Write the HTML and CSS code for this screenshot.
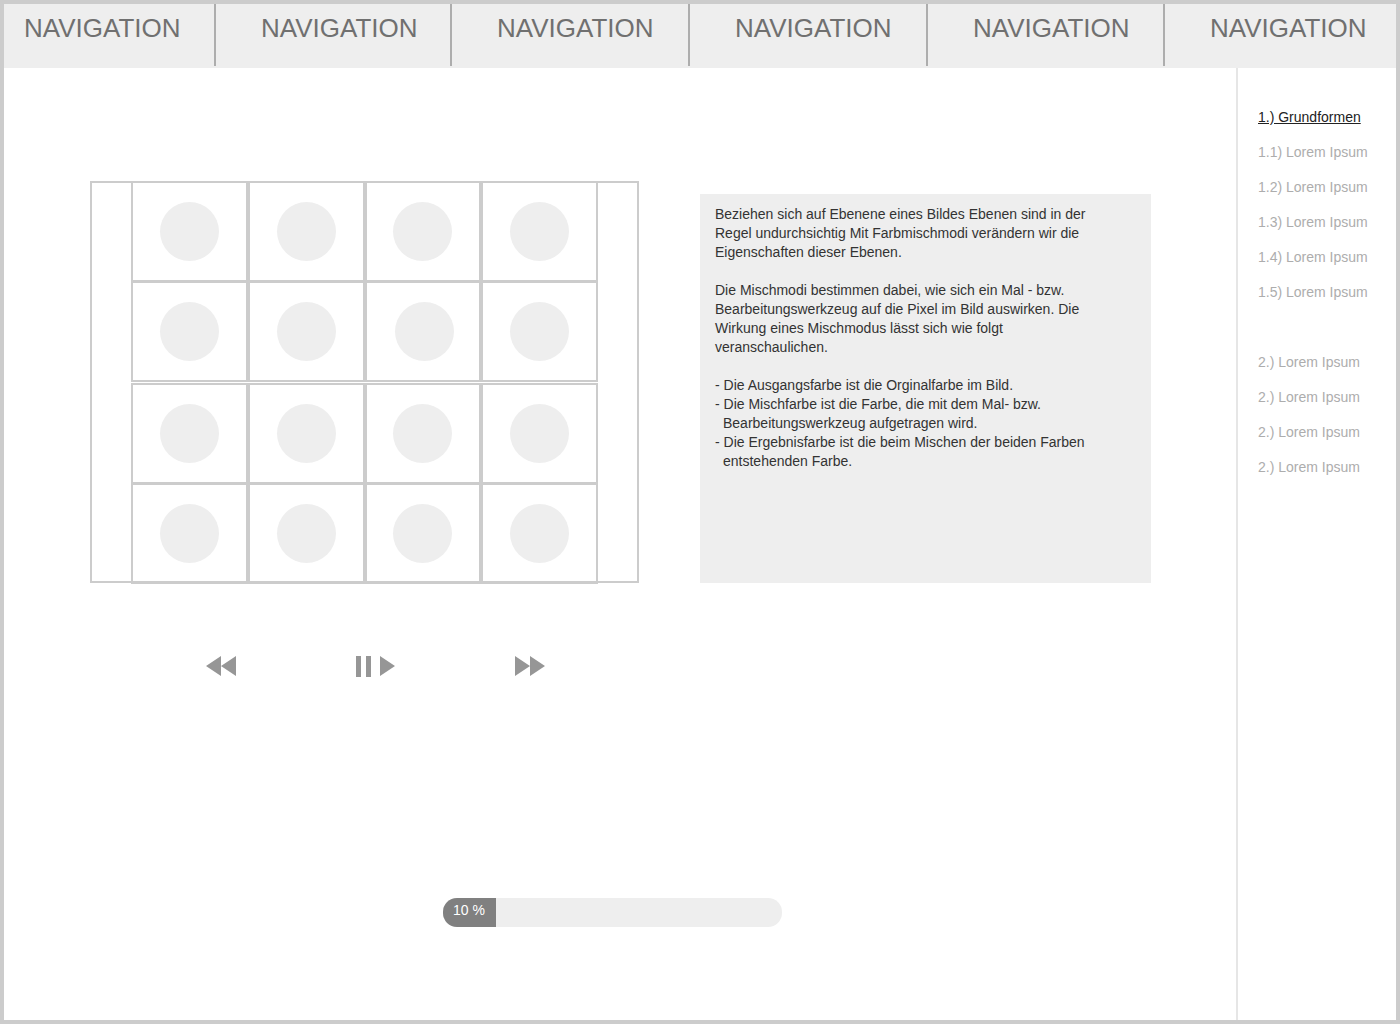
FILE: index.html
```html
<!DOCTYPE html>
<html lang="de">
<head>
<meta charset="utf-8">
<meta name="viewport" content="width=device-width, initial-scale=1">
<title>Grundformen</title>
<link rel="stylesheet" href="styles.css">
</head>
<body>
<div class="page">
  <nav class="topnav" aria-label="Navigation">
    <a href="#">NAVIGATION</a>
    <a href="#">NAVIGATION</a>
    <a href="#">NAVIGATION</a>
    <a href="#">NAVIGATION</a>
    <a href="#">NAVIGATION</a>
    <a href="#">NAVIGATION</a>
  </nav>
  <div class="body">
    <main class="main">
      <div class="stage">
        <div class="gallery">
          <div class="group">
            <div class="row"><div class="cell"></div><div class="cell"></div><div class="cell"></div><div class="cell"></div></div>
            <div class="row"><div class="cell"></div><div class="cell"></div><div class="cell"></div><div class="cell"></div></div>
          </div>
          <div class="group">
            <div class="row"><div class="cell"></div><div class="cell"></div><div class="cell"></div><div class="cell"></div></div>
            <div class="row"><div class="cell"></div><div class="cell"></div><div class="cell"></div><div class="cell"></div></div>
          </div>
        </div>
        <article class="panel">
          <p>Beziehen sich auf Ebenene eines Bildes Ebenen sind in der Regel undurchsichtig Mit Farbmischmodi verändern wir die Eigenschaften dieser Ebenen.</p>
          <p>Die Mischmodi bestimmen dabei, wie sich ein Mal - bzw. Bearbeitungswerkzeug auf die Pixel im Bild auswirken. Die Wirkung eines Mischmodus lässt sich wie folgt veranschaulichen.</p>
          <ul>
            <li>- Die Ausgangsfarbe ist die Orginalfarbe im Bild.</li>
            <li>- Die Mischfarbe ist die Farbe, die mit dem Mal- bzw. Bearbeitungswerkzeug aufgetragen wird.</li>
            <li>- Die Ergebnisfarbe ist die beim Mischen der beiden Farben entstehenden Farbe.</li>
          </ul>
        </article>
      </div>
      <div class="controls">
        <button type="button" aria-label="Zurück">
          <svg width="30" height="21" viewBox="0 0 30 21"><path d="M0 10 15 0V20ZM15 10 30 0V20Z"/></svg>
        </button>
        <button type="button" aria-label="Pause / Abspielen">
          <svg width="39" height="21" viewBox="0 0 39 21"><path d="M0 0H5V21H0ZM10 0H15V21H10ZM24 0 39 10 24 20Z"/></svg>
        </button>
        <button type="button" aria-label="Vor">
          <svg width="30" height="21" viewBox="0 0 30 21"><path d="M0 0 15 10 0 20ZM15 0 30 10 15 20Z"/></svg>
        </button>
      </div>
      <div class="loading">
        <div class="progress" role="progressbar" aria-label="Fortschritt" aria-valuenow="10" aria-valuemin="0" aria-valuemax="100">
          <div class="progress-fill">10 %</div>
        </div>
      </div>
    </main>
    <nav class="sidebar" aria-label="Kapitel">
      <ul>
        <li><a class="current" href="#">1.) Grundformen</a></li>
        <li><a href="#">1.1) Lorem Ipsum</a></li>
        <li><a href="#">1.2) Lorem Ipsum</a></li>
        <li><a href="#">1.3) Lorem Ipsum</a></li>
        <li><a href="#">1.4) Lorem Ipsum</a></li>
        <li><a href="#">1.5) Lorem Ipsum</a></li>
      </ul>
      <ul>
        <li><a href="#">2.) Lorem Ipsum</a></li>
        <li><a href="#">2.) Lorem Ipsum</a></li>
        <li><a href="#">2.) Lorem Ipsum</a></li>
        <li><a href="#">2.) Lorem Ipsum</a></li>
      </ul>
    </nav>
  </div>
</div>
</body>
</html>
```
FILE: styles.css
```css
* {
  box-sizing: border-box;
}

body {
  margin: 0;
  background: #fff;
  color: #333;
  font: 14px/19px "Liberation Sans", Helvetica, Arial, sans-serif;
}

ul,
p {
  margin: 0;
  padding: 0;
}

ul {
  list-style: none;
}

.page {
  display: flex;
  flex-direction: column;
  min-height: 100vh;
  border: 4px solid #ccc;
}

/* Top navigation */
.topnav {
  display: grid;
  grid-template-columns: 212fr 236fr 238fr 238fr 237fr 231fr;
  padding-bottom: 2px;
  background: #eee;
}

.topnav a {
  height: 62px;
  padding: 9px 0 0 45px;
  border-right: 2px solid #adadad;
  color: #707070;
  font-size: 26px;
  line-height: 30px;
  text-decoration: none;
}

.topnav a:first-child {
  padding-left: 20px;
}

.topnav a:last-child {
  border-right: 0;
}

.body {
  display: flex;
  flex: 1;
}

/* Main area */
.main {
  flex: 1;
  padding: 113px 85px 40px 86px;
}

.stage {
  display: grid;
  grid-template-columns: 549fr 451fr;
  gap: 61px;
}

.gallery {
  display: flex;
  flex-direction: column;
  gap: 1px;
  padding: 0 39px;
  border: 2px solid #ccc;
}

/* The rows share the frame's top and bottom lines */
.group:first-child {
  margin-top: -2px;
}

.group:last-child {
  margin-bottom: -3px;
}

.row {
  display: grid;
  grid-template-columns: repeat(4, 1fr);
}

.row + .row {
  margin-top: -1px;
}

.cell {
  display: grid;
  place-items: center;
  height: 101px;
  border: 2px solid #ccc;
}

.cell::before {
  content: "";
  width: 59px;
  height: 59px;
  border-radius: 50%;
  background: #eee;
}

/* This circle sits slightly right of its column */
.group:first-child .row:last-child .cell:nth-child(3) {
  padding-left: 4px;
}

.panel {
  margin-top: 13px;
  padding: 11px 52px 11px 15px;
  background: #eee;
}

.panel p {
  margin-bottom: 19px;
}

.panel li {
  padding-left: 8px;
  text-indent: -8px;
}

.controls {
  display: flex;
  gap: 120px;
  margin-top: 73px;
  padding-left: 116px;
}

.controls button {
  padding: 0;
  border: 0;
  background: none;
  cursor: pointer;
}

.controls svg {
  display: block;
  fill: #969696;
}

.loading {
  display: flex;
  justify-content: center;
  margin-top: 221px;
  padding-right: 16px;
}

.progress {
  width: 339px;
  overflow: hidden;
  border-radius: 14px;
  background: #eee;
}

.progress-fill {
  width: 53px;
  height: 29px;
  padding: 3px 0 0 10px;
  background: #808080;
  color: #fff;
}

/* Chapter list */
.sidebar {
  width: 160px;
  padding: 32px 0 0 20px;
  border-left: 2px solid #e6e6e6;
}

.sidebar ul + ul {
  margin-top: 35px;
}

.sidebar li {
  line-height: 35px;
}

.sidebar a {
  color: #adadad;
  text-decoration: none;
}

.sidebar .current {
  color: #222;
  text-decoration: underline;
}
```
